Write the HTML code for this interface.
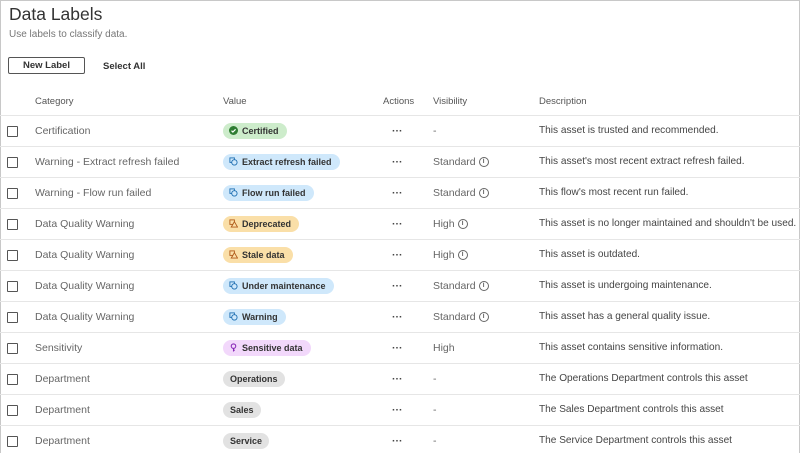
<!DOCTYPE html>
<html><head><style>
body{margin:0;width:800px;height:452px;overflow:hidden;background:#fff;font-family:"Liberation Sans",sans-serif;}
.frame{position:absolute;left:0;top:0;width:798px;height:452px;border:1px solid #c8c8c8;border-bottom:none;}
h1{position:absolute;left:9px;top:4px;margin:0;font-size:17.5px;font-weight:normal;color:#333;}
.sub{position:absolute;left:9px;top:29px;font-size:10px;color:#777;}
.btn{position:absolute;left:8px;top:57px;width:75px;height:15px;border:1px solid #555;border-radius:2px;font-size:9.5px;font-weight:bold;color:#333;text-align:center;line-height:15px;}
.sa{position:absolute;left:103px;top:61px;font-size:9.5px;font-weight:bold;color:#333;}
.hdr{position:absolute;top:96px;font-size:9.5px;color:#555;}
.row{position:absolute;left:0;width:800px;height:31px;border-top:1px solid #e6e6e6;}
.row>*{position:absolute;top:0;line-height:30px;font-size:10.5px;color:#666;white-space:nowrap;}
.cb{left:7px!important;top:10px!important;width:9px;height:9px;border:1px solid #555;border-radius:1px;}
.cat{left:35px;}
.pill{left:223px;top:7px!important;height:16px;line-height:16px!important;border-radius:8px;padding:0 8px 0 6px;font-size:9px!important;font-weight:bold;color:#333!important;}
.dots{left:392px;font-weight:bold;color:#444!important;}
.vis{left:433px;}
.desc{left:539px;color:#444!important;font-size:10.1px!important;}
.i{display:inline-block;width:8px;height:8px;border:1px solid #666;border-radius:50%;font-size:7px;line-height:8px;text-align:center;vertical-align:middle;margin-left:3px;color:#666;font-weight:bold;}
.g{background:#cdeccb}.b{background:#cfe8fb}.o{background:#fadfa8}.p{background:#f2d8fb}.n{background:#e2e2e2;padding:0 7px!important}
.ic{display:inline-block;width:9px;height:9px;vertical-align:-1px;margin-right:4px;}
</style></head><body>
<div class="frame"></div>
<h1>Data Labels</h1>
<div class="sub">Use labels to classify data.</div>
<div class="btn">New Label</div>
<div class="sa">Select All</div>
<div class="hdr" style="left:35px">Category</div>
<div class="hdr" style="left:223px">Value</div>
<div class="hdr" style="left:383px">Actions</div>
<div class="hdr" style="left:433px">Visibility</div>
<div class="hdr" style="left:539px">Description</div>

<div class="row" style="top:115px"><span class="cb"></span><span class="cat">Certification</span><span class="pill g"><svg class="ic" viewBox="0 0 10 10"><circle cx="5" cy="5" r="5" fill="#2e7d32"/><path d="M2.8 5.2l1.5 1.5 3-3" stroke="#fff" stroke-width="1.3" fill="none"/></svg>Certified</span><span class="dots">···</span><span class="vis">-</span><span class="desc">This asset is trusted and recommended.</span></div>
<div class="row" style="top:146px"><span class="cb"></span><span class="cat">Warning - Extract refresh failed</span><span class="pill b"><svg class="ic" viewBox="0 0 10 10"><rect x="1" y="1" width="5" height="5" fill="none" stroke="#1f6fb2"/><circle cx="6" cy="6" r="3" fill="#cfe8fb" stroke="#1f6fb2"/></svg>Extract refresh failed</span><span class="dots">···</span><span class="vis">Standard<span class="i">i</span></span><span class="desc">This asset's most recent extract refresh failed.</span></div>
<div class="row" style="top:177px"><span class="cb"></span><span class="cat">Warning - Flow run failed</span><span class="pill b"><svg class="ic" viewBox="0 0 10 10"><rect x="1" y="1" width="5" height="5" fill="none" stroke="#1f6fb2"/><circle cx="6" cy="6" r="3" fill="#cfe8fb" stroke="#1f6fb2"/></svg>Flow run failed</span><span class="dots">···</span><span class="vis">Standard<span class="i">i</span></span><span class="desc">This flow's most recent run failed.</span></div>
<div class="row" style="top:208px"><span class="cb"></span><span class="cat">Data Quality Warning</span><span class="pill o"><svg class="ic" viewBox="0 0 10 10"><rect x="1" y="1" width="5" height="5" fill="none" stroke="#b05a1a"/><path d="M6 3l3.5 6h-7z" fill="#fadfa8" stroke="#b05a1a"/></svg>Deprecated</span><span class="dots">···</span><span class="vis">High<span class="i">i</span></span><span class="desc">This asset is no longer maintained and shouldn't be used.</span></div>
<div class="row" style="top:239px"><span class="cb"></span><span class="cat">Data Quality Warning</span><span class="pill o"><svg class="ic" viewBox="0 0 10 10"><rect x="1" y="1" width="5" height="5" fill="none" stroke="#b05a1a"/><path d="M6 3l3.5 6h-7z" fill="#fadfa8" stroke="#b05a1a"/></svg>Stale data</span><span class="dots">···</span><span class="vis">High<span class="i">i</span></span><span class="desc">This asset is outdated.</span></div>
<div class="row" style="top:270px"><span class="cb"></span><span class="cat">Data Quality Warning</span><span class="pill b"><svg class="ic" viewBox="0 0 10 10"><rect x="1" y="1" width="5" height="5" fill="none" stroke="#1f6fb2"/><circle cx="6" cy="6" r="3" fill="#cfe8fb" stroke="#1f6fb2"/></svg>Under maintenance</span><span class="dots">···</span><span class="vis">Standard<span class="i">i</span></span><span class="desc">This asset is undergoing maintenance.</span></div>
<div class="row" style="top:301px"><span class="cb"></span><span class="cat">Data Quality Warning</span><span class="pill b"><svg class="ic" viewBox="0 0 10 10"><rect x="1" y="1" width="5" height="5" fill="none" stroke="#1f6fb2"/><circle cx="6" cy="6" r="3" fill="#cfe8fb" stroke="#1f6fb2"/></svg>Warning</span><span class="dots">···</span><span class="vis">Standard<span class="i">i</span></span><span class="desc">This asset has a general quality issue.</span></div>
<div class="row" style="top:332px"><span class="cb"></span><span class="cat">Sensitivity</span><span class="pill p"><svg class="ic" viewBox="0 0 10 10"><circle cx="5" cy="3.5" r="2.5" fill="none" stroke="#8a2bb8" stroke-width="1.2"/><path d="M5 6v3.5M5 8h1.5" stroke="#8a2bb8" stroke-width="1.2"/></svg>Sensitive data</span><span class="dots">···</span><span class="vis">High</span><span class="desc">This asset contains sensitive information.</span></div>
<div class="row" style="top:363px"><span class="cb"></span><span class="cat">Department</span><span class="pill n">Operations</span><span class="dots">···</span><span class="vis">-</span><span class="desc">The Operations Department controls this asset</span></div>
<div class="row" style="top:394px"><span class="cb"></span><span class="cat">Department</span><span class="pill n">Sales</span><span class="dots">···</span><span class="vis">-</span><span class="desc">The Sales Department controls this asset</span></div>
<div class="row" style="top:425px"><span class="cb"></span><span class="cat">Department</span><span class="pill n">Service</span><span class="dots">···</span><span class="vis">-</span><span class="desc">The Service Department controls this asset</span></div>
</body></html>
